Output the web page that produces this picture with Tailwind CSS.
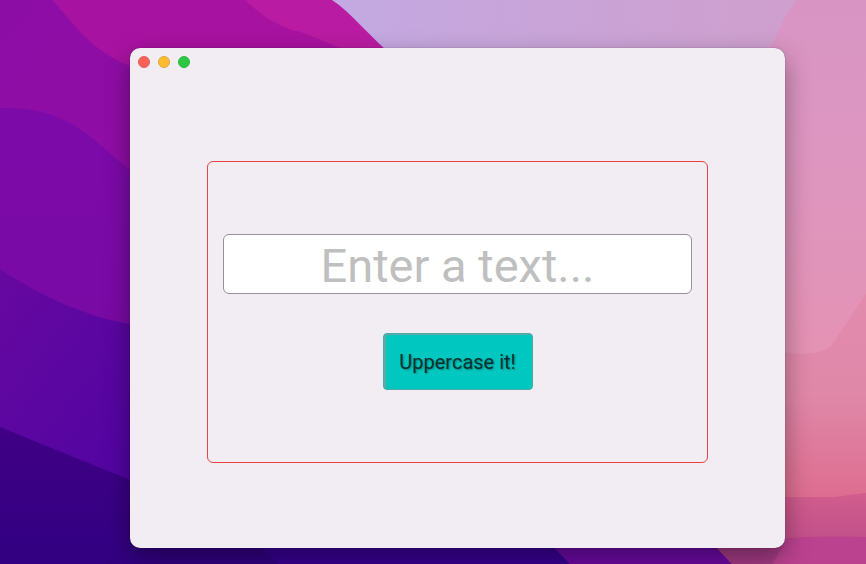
<!DOCTYPE html>
<html lang="en">
<head>
<meta charset="utf-8">
<meta name="viewport" content="width=device-width, initial-scale=1">
<title>Uppercase</title>
<script src="https://cdn.jsdelivr.net/npm/@tailwindcss/browser@4"></script>
</head>
<body class="font-['Roboto','Liberation_Sans',sans-serif]">
<div class="relative isolate flex min-h-screen overflow-hidden bg-[#320084] pt-12 pr-[81px] pb-4 pl-[130px]">
  <!-- Wallpaper -->
  <svg class="absolute inset-0 -z-10 h-full w-full" viewBox="0 0 866 564" preserveAspectRatio="none" aria-hidden="true">
    <defs>
      <linearGradient id="a" x1="0" y1="0" x2="1" y2="1"><stop offset="0" stop-color="#8c0da6"/><stop offset="1" stop-color="#960ea0"/></linearGradient>
      <linearGradient id="b" x1="0" y1="0" x2="0" y2="1"><stop offset="0" stop-color="#7c0aa9"/><stop offset="1" stop-color="#780aa2"/></linearGradient>
      <linearGradient id="c" x1="0" y1="0" x2="1" y2="1"><stop offset="0" stop-color="#6608a0"/><stop offset="1" stop-color="#4c03a2"/></linearGradient>
      <linearGradient id="d" x1="0" y1="0" x2="0" y2="1"><stop offset="0" stop-color="#400086"/><stop offset="1" stop-color="#320082"/></linearGradient>
      <linearGradient id="e" x1="0" y1="0" x2="1" y2="0"><stop offset="0" stop-color="#c3a9e2"/><stop offset="1" stop-color="#cf9fcd"/></linearGradient>
      <linearGradient id="f" gradientUnits="userSpaceOnUse" x1="0" y1="0" x2="0" y2="380"><stop offset="0" stop-color="#d895c4"/><stop offset=".4" stop-color="#dd96c0"/><stop offset="1" stop-color="#e592b2"/></linearGradient>
      <linearGradient id="g" gradientUnits="userSpaceOnUse" x1="0" y1="290" x2="0" y2="498"><stop offset="0" stop-color="#e28bad"/><stop offset=".5" stop-color="#e088a8"/><stop offset="1" stop-color="#dd6d90"/></linearGradient>
      <linearGradient id="h" gradientUnits="userSpaceOnUse" x1="0" y1="495" x2="0" y2="540"><stop offset="0" stop-color="#d05d8c"/><stop offset="1" stop-color="#c2508a"/></linearGradient>
    </defs>
    <rect width="400" height="500" fill="url(#a)"/>
    <path d="M52 0C76 26 90 50 130 66H420V0Z" fill="#a812a0"/>
    <path d="M245 0C267 20 278 26 300 32C318 38 330 44 344 50H400V0Z" fill="#b91ca2"/>
    <path d="M0 108C70 106 92 140 130 170L200 220V400H0Z" fill="url(#b)"/>
    <path d="M0 269C40 296 90 318 130 324L180 330V500H0Z" fill="url(#c)"/>
    <path d="M0 427L130 480L260 548L278 564H0Z" fill="url(#d)"/>
    <path d="M252 540L278 564H580L554 540Z" fill="#380092"/>
    <path d="M546 540L570 564H736L716 540Z" fill="#6c0aa4"/>
    <path d="M332 0C350 12 366 32 385 49H800V0Z" fill="url(#e)"/>
    <path d="M797 0C785 12 779 32 770 48V500H866V0Z" fill="url(#f)"/>
    <path d="M866 294L834 342C824 356 800 356 770 350V500H866Z" fill="url(#g)"/>
    <path d="M770 497H834L866 493V564H770Z" fill="url(#h)"/>
    <path d="M716 547L732 564H866V537C830 536 800 536 770 540Z" fill="#bb428f"/>
    <path d="M716 547L732 564H772L785 543Z" fill="#a53b86"/>
  </svg>

  <!-- Application window -->
  <div class="flex min-w-0 flex-1 flex-col rounded-[10px] bg-[#f2edf3] shadow-[0_0_1px_rgba(0,0,0,0.6),0_10px_26px_rgba(0,0,0,0.38)]">
    <header class="flex h-7 items-center gap-2 px-2">
      <button type="button" aria-label="Close" class="size-3 rounded-full border border-[#de625c] bg-[#fb5f57]"></button>
      <button type="button" aria-label="Minimize" class="size-3 rounded-full border border-[#e0a63a] bg-[#fdbc2f]"></button>
      <button type="button" aria-label="Zoom" class="size-3 rounded-full border border-[#32b44a] bg-[#2bc840]"></button>
    </header>
    <main class="flex flex-1 flex-col justify-center px-[77px]">
      <form class="flex flex-col items-center gap-[39px] rounded-md border border-[#e8423f] px-[15px] py-[72px]">
        <input type="text" aria-label="Text" placeholder="Enter a text..." class="h-[60px] w-full rounded-md border border-[#969198] bg-white px-2 pt-1 text-center text-[47px] text-black placeholder:text-[#bfbfbf]">
        <button type="button" class="h-[57px] min-w-[150px] rounded-sm border border-[#4fa8a4] bg-[#00c8c0] px-[15px] text-[20px] text-[#06302f] shadow-[inset_2px_1px_1px_#5fa9a6] text-shadow-[1px_1px_2px_rgba(0,0,0,0.35)]">Uppercase it!</button>
      </form>
    </main>
  </div>
</div>
</body>
</html>
